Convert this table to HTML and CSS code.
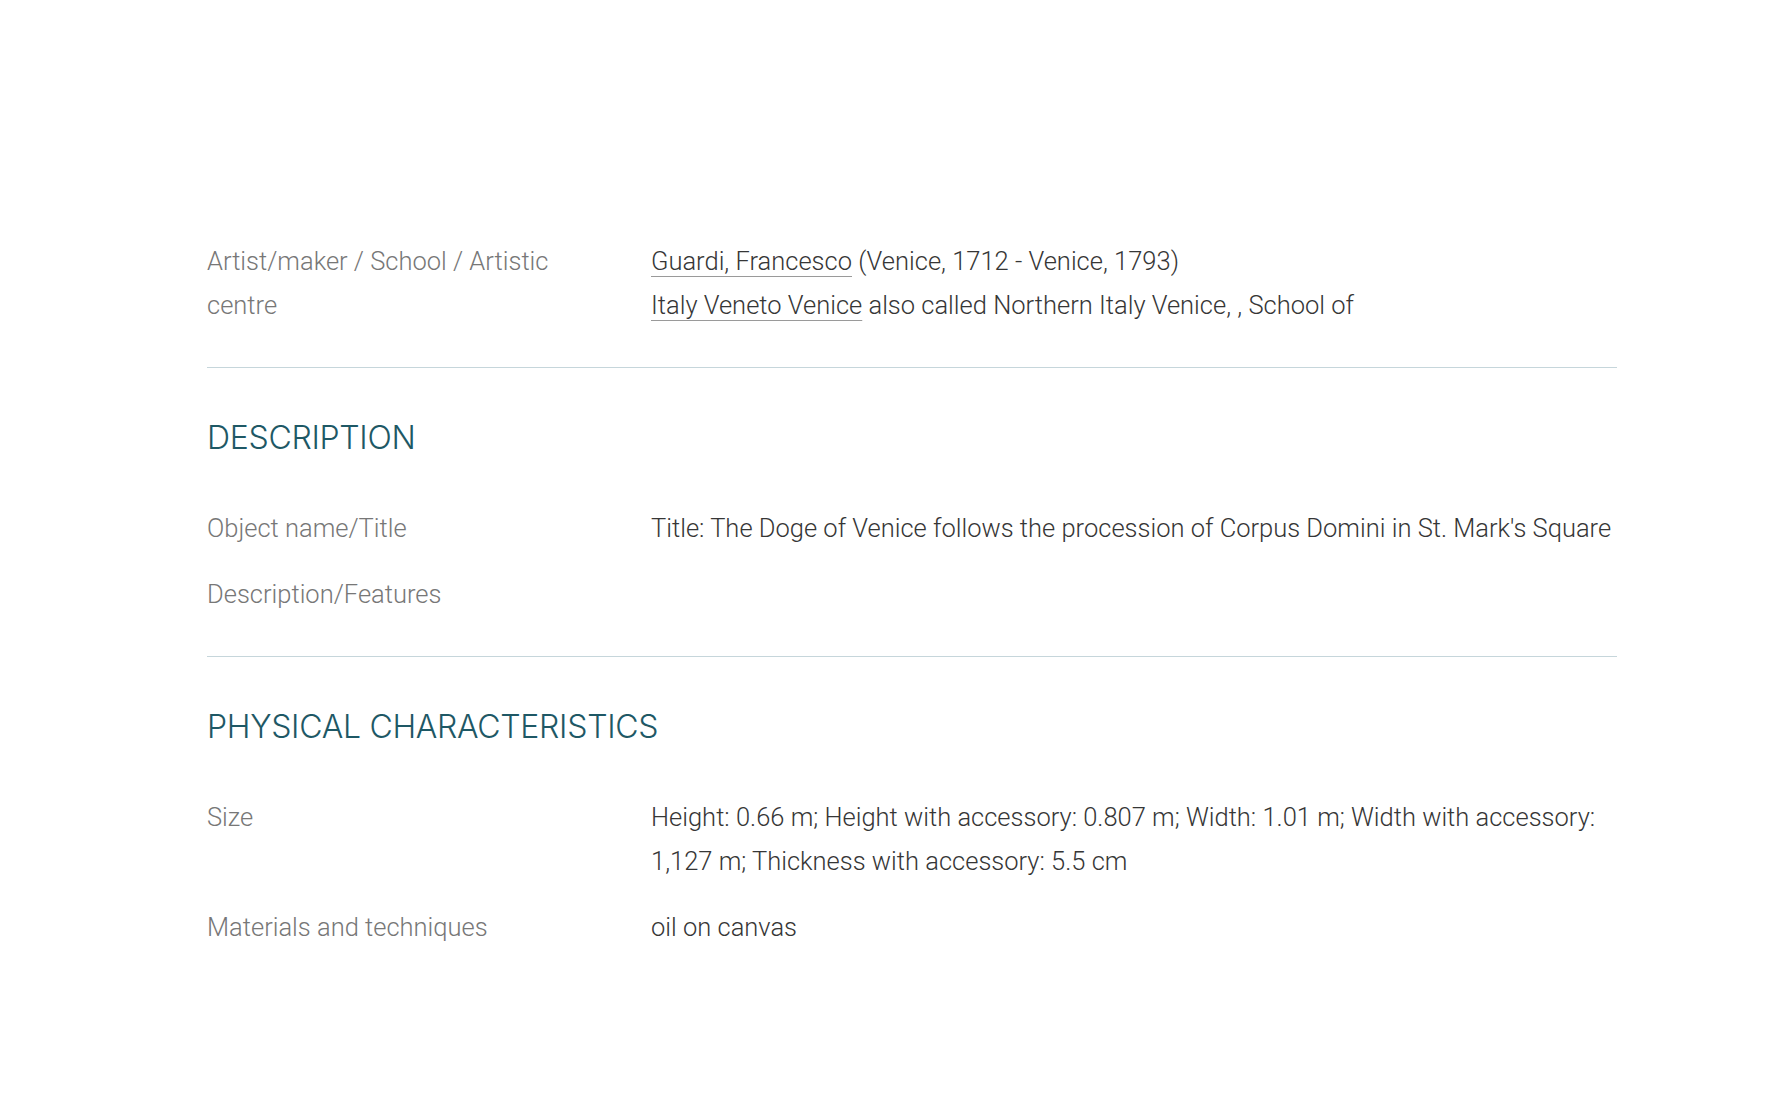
FILE: index.html
```html
<!DOCTYPE html>
<html lang="en">
<head>
    <meta charset="UTF-8">
    <meta name="viewport" content="width=device-width, initial-scale=1.0">
    <title>The Doge of Venice follows the procession of Corpus Domini</title>
    <link rel="stylesheet" href="styles.css">
</head>
<body>

    <main class="record">

        <section class="record-section first">
            <div class="field">
                <div class="field-label">Artist/maker / School / Artistic centre</div>
                <div class="field-value">
                    <div><a href="#">Guardi, Francesco</a> (Venice, 1712 - Venice, 1793)</div>
                    <div><a href="#">Italy Veneto Venice</a> also called Northern Italy Venice, , School of</div>
                </div>
            </div>
        </section>

        <section class="record-section">
            <h2>DESCRIPTION</h2>
            <div class="field">
                <div class="field-label">Object name/Title</div>
                <div class="field-value">Title: The Doge of Venice follows the procession of Corpus Domini in St. Mark's Square</div>
            </div>
            <div class="field">
                <div class="field-label">Description/Features</div>
                <div class="field-value"></div>
            </div>
        </section>

        <section class="record-section last">
            <h2>PHYSICAL CHARACTERISTICS</h2>
            <div class="field">
                <div class="field-label">Size</div>
                <div class="field-value">Height: 0.66 m; Height with accessory: 0.807 m; Width: 1.01 m; Width with accessory: 1,127 m; Thickness with accessory: 5.5 cm</div>
            </div>
            <div class="field">
                <div class="field-label">Materials and techniques</div>
                <div class="field-value">oil on canvas</div>
            </div>
        </section>

    </main>

</body>
</html>
```

FILE: styles.css
```css
/* Ficha de la obra */
body {
    margin: 0;
    background-color: #fff;
    font-family: Roboto, "Liberation Sans", Arial, sans-serif;
    font-weight: 300;
    color: #3b3b3b;
}

.record {
    width: 1410px;
    margin-left: 207px;
    padding: 239px 0 120px;
}

.record-section {
    padding-bottom: 18px;
    border-bottom: 1px solid #c6d6db;
}
.record-section.last {
    border-bottom: none;
}

.record-section h2 {
    margin: 50px 0 48px;
    font-family: Inter, "Open Sans", sans-serif;
    font-weight: 350;
    font-size: 32px;
    line-height: 40px;
    letter-spacing: -0.3px;
    color: #1e5865;
}

.field {
    display: grid;
    grid-template-columns: 444px 1fr;
    margin-bottom: 22px;
    line-height: 44px;
}

.field-label {
    font-size: 25.5px;
    color: #777;
    padding-right: 60px;
}

.field-value {
    font-size: 25.5px;
    color: #363636;
    min-height: 44px;
}

.field-value a {
    color: inherit;
    text-decoration: underline;
    text-decoration-color: #9a9a9a;
    text-decoration-thickness: 1px;
    text-underline-offset: 6px;
}
```
